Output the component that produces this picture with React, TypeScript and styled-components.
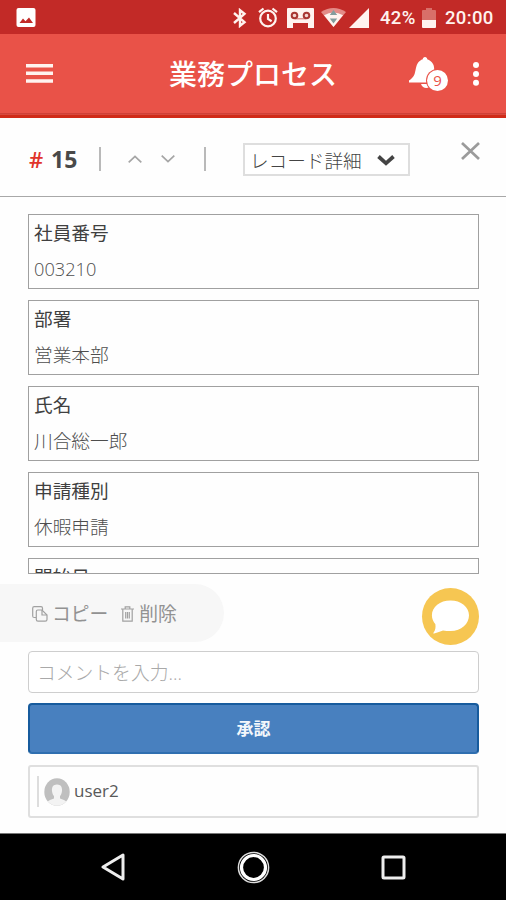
import React from "react";
import styled, { createGlobalStyle } from "styled-components";

const GlobalStyle = createGlobalStyle`
  *, *::before, *::after { box-sizing: border-box; }
  body { margin: 0; background: #fefefe; }
  svg { display: block; flex: none; }
  button { font: inherit; color: inherit; border: 0; background: none; padding: 0; }
`;

const Screen = styled.div`
  width: 506px;
  height: 900px;
  display: flex;
  flex-direction: column;
  overflow: hidden;
  background: #fefefe;
  color: #444;
  font-family: "Open Sans", "Noto Sans CJK JP", sans-serif;
`;

const StatusBar = styled.div`
  height: 34px;
  flex: none;
  display: flex;
  align-items: center;
  padding: 1px 11px 0 16px;
  background: #c22a27;
  color: #fff3ef;
  font: 500 18.5px/34px Roboto, sans-serif;
`;

const StatusIcons = styled.div`
  margin-left: auto;
  display: flex;
  align-items: center;
`;

const Slot = styled.span<{ $gap: number }>`
  margin-left: ${(p) => p.$gap}px;
`;

const StatusText = styled(Slot)<{ $width: number }>`
  width: ${(p) => p.$width}px;
  white-space: nowrap;
  letter-spacing: 0.35px;
`;

const AppBar = styled.header`
  height: 84px;
  flex: none;
  display: grid;
  grid-template-columns: 169px 168px 1fr;
  align-items: center;
  padding-bottom: 1px;
  background: linear-gradient(#e95248 0 79px, #cf4038 79px 80px, #d84a3e 80px 81px, #d02b19 81px 84px);
  color: #fff;
`;

const MenuButton = styled.button`
  width: 27px;
  margin: -4px 0 0 26px;
`;

const Title = styled.h1`
  margin: -4px 0 0;
  font-size: 28px;
  line-height: 40px;
  font-weight: 500;
  white-space: nowrap;
`;

const AppActions = styled.div`
  display: flex;
  align-items: center;
  margin: -4px 0 0 72px;
  gap: 24px;
`;

const BellButton = styled.button`
  position: relative;
  width: 39px;
  height: 34px;
`;

const BellBadge = styled.span`
  position: absolute;
  left: 18px;
  top: 13px;
  width: 21px;
  height: 21px;
  border-radius: 50%;
  background: #fff;
  color: #e95248;
  font-size: 15px;
  line-height: 21px;
  text-align: center;
  box-shadow: 0 0 0 1px #e95248;
`;

const RecordBar = styled.div`
  height: 79px;
  flex: none;
  display: flex;
  align-items: center;
  padding: 4px 26px 0 29px;
  border-bottom: 1px solid #a8a8a8;
`;

const RecordNumber = styled.div`
  width: 70px;
  display: flex;
  gap: 7px;
  font-size: 23px;
  line-height: 30px;
  font-weight: 700;
  color: #494949;
`;

const Hash = styled.span`
  width: 15px;
  color: #e1342b;
  font-size: 22px;
  font-weight: 600;
`;

const Divider = styled.i`
  width: 2px;
  height: 24px;
  background: #b9b9b9;
`;

const Pager = styled.div`
  display: flex;
  gap: 19px;
  padding: 0 29px 0 27px;
`;

const Select = styled.button`
  width: 167px;
  height: 33px;
  margin-left: 37px;
  display: flex;
  align-items: center;
  justify-content: space-between;
  padding: 2px 13px 0 5px;
  border: 2px solid #dedede;
  background: #fff;
  font-size: 18.6px;
  line-height: 29px;
  color: #444;
  font-weight: 300;
`;

const CloseButton = styled.button`
  margin: -16px 0 0 auto;
`;

const Fields = styled.main`
  height: 378px;
  flex: none;
  display: flex;
  flex-direction: column;
  gap: 11px;
  padding: 17px 27px 0 28px;
  overflow: hidden;
`;

const Field = styled.section<{ $cut?: boolean }>`
  height: ${(p) => (p.$cut ? 16 : 75)}px;
  flex: none;
  overflow: hidden;
  padding: 1px 5px;
  border: 1px solid #a0a0a0;
  font-size: 18.7px;
`;

const Label = styled.div`
  height: 36px;
  line-height: 34px;
  color: #404040;
  font-weight: 400;
`;

const Value = styled.div<{ $latin?: boolean }>`
  line-height: 34px;
  color: #4d4d4d;
  font-weight: 300;
  font-size: ${(p) => (p.$latin ? 18.2 : 18.7)}px;
`;

const ActionRow = styled.div`
  height: 58px;
  margin-top: 9px;
  flex: none;
  display: flex;
  justify-content: space-between;
  align-items: center;
  padding-right: 27px;
`;

const RecordActions = styled.div`
  width: 224px;
  height: 58px;
  display: flex;
  align-items: center;
  gap: 13px;
  padding: 1px 0 0 32px;
  border-radius: 0 29px 29px 0;
  background: #f7f7f7;
`;

const Action = styled.button<{ $gap: number }>`
  display: flex;
  align-items: center;
  gap: ${(p) => p.$gap}px;
  font-size: 18.8px;
  line-height: 28px;
  color: #929292;
`;

const ChatButton = styled.button`
  width: 57px;
  height: 57px;
  margin-top: 6px;
  border-radius: 50%;
  background: #f6c652;
`;

const Footer = styled.div`
  flex: 1;
  display: flex;
  flex-direction: column;
  padding: 9px 27px 0 28px;
`;

const CommentInput = styled.input`
  height: 42px;
  width: 100%;
  margin-bottom: 10px;
  padding: 2px 8px 0;
  border: 1px solid #cecece;
  border-radius: 4px;
  background: #fff;
  font: 300 18.8px/28px "Open Sans", "Noto Sans CJK JP", sans-serif;
  &::placeholder { color: #a9a9a9; opacity: 1; }
`;

const ApproveButton = styled.button`
  height: 51px;
  margin-bottom: 11px;
  padding-bottom: 3px;
  border: 2px solid #175b9d;
  border-bottom-color: #2f6fb0;
  border-radius: 4px;
  background: #4880bf;
  color: #f3f7fb;
  font-size: 17px;
  font-weight: 600;
`;

const UserBox = styled.div`
  height: 53px;
  display: flex;
  align-items: center;
  padding-left: 7px;
  border: 2px solid #dfdfdf;
  border-radius: 3px;
  font-size: 17px;
  color: #595959;
`;

const QuoteBar = styled.i`
  width: 2px;
  height: 31px;
  margin-right: 5px;
  background: #ddd;
`;

const UserName = styled.span`
  margin: -2px 0 0 4px;
`;

const NavBar = styled.nav`
  height: 67px;
  flex: none;
  display: grid;
  grid-template-columns: repeat(3, 140.5px);
  justify-content: center;
  justify-items: center;
  align-items: center;
  background: #000;
  border-top: 1px solid #777;
`;

const fields = [
  { label: "社員番号", value: "003210", latin: true },
  { label: "部署", value: "営業本部" },
  { label: "氏名", value: "川合総一郎" },
  { label: "申請種別", value: "休暇申請" },
  { label: "開始日", value: "", cut: true },
];

const PictureIcon = () => (
  <svg width="20" height="20" viewBox="0 0 20 20">
    <rect x=".5" y="0" width="19" height="19" rx="2" fill="#fff" />
    <path d="M3.5 15 7 10.5l2.5 2.7 3.5-3.7 4 5.5z" fill="#c22a27" />
  </svg>
);

const BluetoothIcon = () => (
  <svg width="14" height="20" viewBox="0 0 14 20" fill="none" stroke="#fff3ef" strokeWidth="2.4">
    <path d="m1 5 10.5 9.2L7 17.8V2.2l4.5 3.6L1 15" />
  </svg>
);

const AlarmIcon = () => (
  <svg width="20" height="21" viewBox="0 0 20 21" fill="none" stroke="#fff3ef" strokeWidth="2.2">
    <circle cx="10" cy="11.5" r="7.8" />
    <path d="M1 5.2 5.5 1.5M19 5.2l-4.5-3.7M10 7v5l3.6 2.3" />
  </svg>
);

const VoicemailIcon = () => (
  <svg width="27" height="20" viewBox="0 0 27 20">
    <path d="M1 0h25q1 0 1 1v19h-6v-5H6v5H0V1q0-1 1-1z" fill="#fff3ef" />
    <path d="M8 10.8h11" stroke="#c22a27" strokeWidth=".7" />
    <g fill="#f4d5d0" stroke="#a83632" strokeWidth="2">
      <circle cx="7.5" cy="7.5" r="2.8" />
      <circle cx="19.5" cy="7.5" r="2.8" />
    </g>
  </svg>
);

const WifiIcon = () => (
  <svg width="25" height="19" viewBox="0 0 25 19">
    <path d="M0 4Q12.5-4 25 4L12.5 19z" fill="#e38b87" />
    <path d="M3 7.3q9.5-5.8 19 0L12.5 19z" fill="#fff3ef" />
    <path d="m12.5 2 3.7 5H8.8zm0 13.5L8.8 10.5h7.4z" fill="#839c9d" />
  </svg>
);

const SignalIcon = () => (
  <svg width="20" height="20" viewBox="0 0 20 20">
    <path d="M20 0v20H0z" fill="#fff3ef" />
  </svg>
);

const BatteryIcon = () => (
  <svg width="14" height="20" viewBox="0 0 14 20">
    <path d="M4 0h6v2h3q1 0 1 1v9H0V3q0-1 1-1h3z" fill="#d86f69" />
    <path d="M0 12h14v7q0 1-1 1H1q-1 0-1-1z" fill="#fff3ef" />
  </svg>
);

const MenuIcon = () => (
  <svg width="27" height="19" viewBox="0 0 27 19" fill="#fff3ef">
    <path d="M0 0h27v3.5H0zM0 7.5h27V11H0zM0 15.3h27v3.5H0z" />
  </svg>
);

const BellIcon = () => (
  <svg width="30" height="33" viewBox="0 0 30 33" fill="#fff">
    <path d="M16 0c1.4 0 2.2 1 2.2 2.2 5 2 7 5 7 10 0 8 1.3 10.5 4.3 13.3H0v-2C5.6 20 5.7 17 6.9 11.3 8 6.5 9.7 3.7 13.8 2.2 13.8 1 14.6 0 16 0zM12 27h10c-1 5.3-8.4 5.3-10 0z" />
  </svg>
);

const MoreIcon = () => (
  <svg width="8" height="24" viewBox="0 0 8 24" fill="#fff">
    <circle cx="4" cy="3" r="3" />
    <circle cx="4" cy="12" r="3" />
    <circle cx="4" cy="20.8" r="3" />
  </svg>
);

const Chevron = ({ up = false }: { up?: boolean }) => (
  <svg width="14" height="8" viewBox="0 0 14 8" fill="none" stroke="#a5a5a5" strokeWidth="1.7">
    <path d={up ? "m.7 7.3 6.3-6 6.3 6" : "m.7.7 6.3 6 6.3-6"} />
  </svg>
);

const SelectArrow = () => (
  <svg width="18" height="11" viewBox="0 0 18 11" fill="none" stroke="#444" strokeWidth="3.8">
    <path d="m1.5 1.5 7.5 6.8 7.5-6.8" />
  </svg>
);

const CloseIcon = () => (
  <svg width="19" height="18" viewBox="0 0 19 18" fill="none" stroke="#9b9b9b" strokeWidth="2.7">
    <path d="m1 1 17 16M18 1 1 17" />
  </svg>
);

const CopyIcon = () => (
  <svg width="16" height="16" viewBox="0 0 16 16" fill="none" stroke="#a1a1a1" strokeWidth="1.2">
    <path d="M4 11.5H2.2Q.7 11.5.7 10V2.2Q.7.7 2.2.7H9q1.5 0 1.5 1.5V4" />
    <path d="M5.8 4H10l5 5v4.5q0 1.7-1.7 1.7H6q-1.7 0-1.7-1.7V5.5Q4.3 4 5.8 4z" />
    <path d="M10 4v5h5" />
  </svg>
);

const TrashIcon = () => (
  <svg width="13" height="16" viewBox="0 0 13 16" fill="none" stroke="#a1a1a1" strokeWidth="1.2">
    <path d="M0 3h13M4.2 3V.8h4.6V3M1.8 3v12.2h9.4V3M4.7 6v6.5M6.5 6v6.5M8.3 6v6.5" />
  </svg>
);

const ChatIcon = () => (
  <svg width="57" height="57" viewBox="0 0 57 57" fill="#fff">
    <path d="M28.5 12.5C39 12.5 47 18.8 47 27.3S39.5 43 28.5 43c-2.7 0-5-.4-7.5-.6-2.6 1-5.6 2.2-8.8 3.2-.8.2-1-.5-.6-1.1 1.8-2.5 2.2-4.8 1.8-8.3-2.2-2.6-3.5-5.6-3.5-8.9 0-8.5 8-14.8 18.6-14.8z" />
  </svg>
);

const Avatar = () => (
  <svg width="26" height="28" viewBox="0 0 26 28">
    <defs>
      <clipPath id="avatarClip">
        <ellipse cx="13" cy="14" rx="12.7" ry="13.7" />
      </clipPath>
    </defs>
    <g clipPath="url(#avatarClip)">
      <path d="M0 0h26v28H0z" fill="#bfbfbf" />
      <path d="M13 6.5c4 0 5.3 2.8 5 6.4-.2 2.3-1 4-2 5.2v2.5c3.6 1.3 7.4 2.2 8.5 7.4h-23c1-5.2 5-6.1 8.5-7.4v-2.5c-1-1.2-1.8-2.9-2-5.2-.3-3.6 1-6.4 5-6.4z" fill="#f3f3f3" />
    </g>
  </svg>
);

const BackIcon = () => (
  <svg width="25" height="28" viewBox="0 0 25 28" fill="none" stroke="#eee" strokeWidth="3" strokeLinejoin="round">
    <path d="M23 2v24L3 14z" />
  </svg>
);

const HomeIcon = () => (
  <svg width="33" height="33" viewBox="0 0 33 33" fill="none">
    <circle cx="16.5" cy="16.5" r="15.1" stroke="#ddd" strokeWidth="1.5" />
    <circle cx="16.5" cy="16.5" r="12" stroke="#fff" strokeWidth="3.2" />
  </svg>
);

const RecentsIcon = () => (
  <svg width="25" height="25" viewBox="0 0 25 25" fill="none" stroke="#eee" strokeWidth="3">
    <rect x="2" y="2" width="21" height="21" rx="1" />
  </svg>
);

export default function App() {
  return (
    <>
      <GlobalStyle />
      <Screen>
        <StatusBar>
          <PictureIcon />
          <StatusIcons>
            <BluetoothIcon />
            <Slot $gap={11}><AlarmIcon /></Slot>
            <Slot $gap={9}><VoicemailIcon /></Slot>
            <Slot $gap={7}><WifiIcon /></Slot>
            <Slot $gap={3}><SignalIcon /></Slot>
            <StatusText $gap={11} $width={37}>42%</StatusText>
            <Slot $gap={5}><BatteryIcon /></Slot>
            <StatusText $gap={9} $width={50}>20:00</StatusText>
          </StatusIcons>
        </StatusBar>
        <AppBar>
          <MenuButton aria-label="メニュー"><MenuIcon /></MenuButton>
          <Title>業務プロセス</Title>
          <AppActions>
            <BellButton><BellIcon /><BellBadge>9</BellBadge></BellButton>
            <MoreIcon />
          </AppActions>
        </AppBar>
        <RecordBar>
          <RecordNumber><Hash>#</Hash>15</RecordNumber>
          <Divider />
          <Pager><Chevron up /><Chevron /></Pager>
          <Divider />
          <Select>レコード詳細<SelectArrow /></Select>
          <CloseButton><CloseIcon /></CloseButton>
        </RecordBar>
        <Fields>
          {fields.map((f) => (
            <Field key={f.label} $cut={f.cut}>
              <Label>{f.label}</Label>
              {f.value && <Value $latin={f.latin}>{f.value}</Value>}
            </Field>
          ))}
        </Fields>
        <ActionRow>
          <RecordActions>
            <Action $gap={4}><CopyIcon />コピー</Action>
            <Action $gap={5}><TrashIcon />削除</Action>
          </RecordActions>
          <ChatButton><ChatIcon /></ChatButton>
        </ActionRow>
        <Footer>
          <CommentInput placeholder="コメントを入力..." />
          <ApproveButton>承認</ApproveButton>
          <UserBox>
            <QuoteBar />
            <Avatar />
            <UserName>user2</UserName>
          </UserBox>
        </Footer>
        <NavBar>
          <BackIcon />
          <HomeIcon />
          <RecentsIcon />
        </NavBar>
      </Screen>
    </>
  );
}
